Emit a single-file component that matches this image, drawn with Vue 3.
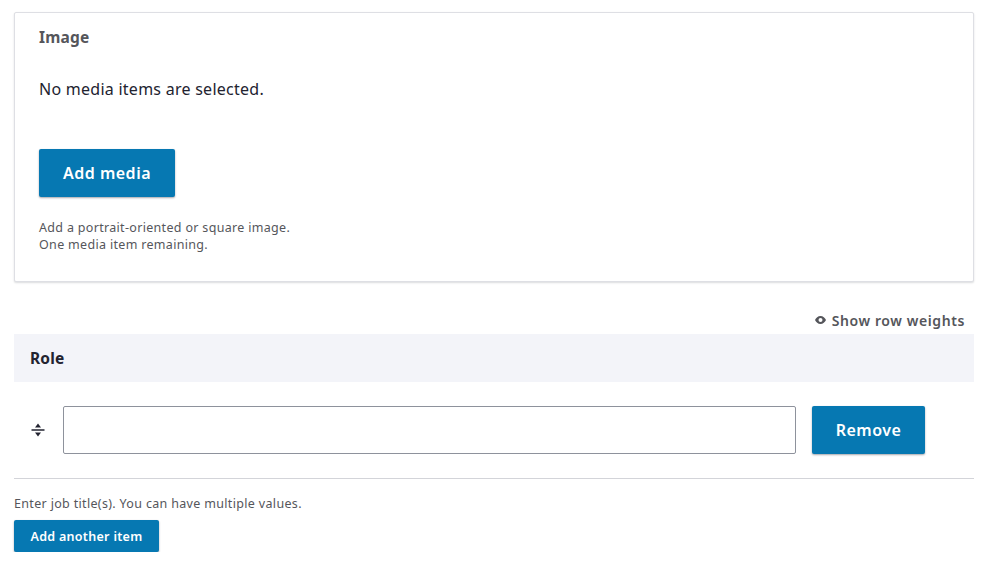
<script setup>
const hints = ["Add a portrait-oriented or square image.", "One media item remaining."];
</script>
<template>
  <div class="page">
    <section class="card">
      <h4 class="label">Image</h4>
      <p class="empty">No media items are selected.</p>
      <button class="btn add-media" type="button">Add media</button>
      <div class="desc">
        <div v-for="line in hints" :key="line">{{ line }}</div>
      </div>
    </section>

    <div class="weights">
      <a class="weights-link">
        <svg width="11" height="8" viewBox="0 0 11 8">
          <path fill="#55565b" fill-rule="evenodd" d="M5.5 0C8 0 10 1.7 11 4 10 6.3 8 8 5.5 8S1 6.3 0 4C1 1.7 3 0 5.5 0ZM5.5 2a2 2 0 1 0 0 4 2 2 0 0 0 0-4Z" />
        </svg>
        Show row weights
      </a>
    </div>

    <div class="table-head">Role</div>
    <div class="row">
      <span class="handle">
        <svg width="14" height="14" viewBox="0 0 14 14">
          <path fill="#222330" d="M7 0.5 10 4.5H4Z M0.5 6.2H13.5V7.8H0.5Z M4 9.5H10L7 13.5Z" />
        </svg>
      </span>
      <input class="text-input" type="text" />
      <button class="btn remove" type="button">Remove</button>
    </div>

    <div class="help">Enter job title(s). You can have multiple values.</div>
    <button class="btn small" type="button">Add another item</button>
  </div>
</template>
<style scoped>
.page {
  width: 960px;
  padding: 12px 18px 0 14px;
  font-family: "Noto Sans", sans-serif;
  color: #222330;
}
.card {
  height: 270px;
  box-sizing: border-box;
  padding: 14px 24px 0;
  background: #fff;
  border: 1px solid #dedfe4;
  border-radius: 2px;
  box-shadow: 0 1px 2px rgba(34, 35, 48, 0.16);
}
.label {
  margin: 0;
  font-size: 15.5px;
  line-height: 20px;
  font-weight: 700;
  letter-spacing: 0.2px;
  color: #55565b;
}
.empty {
  margin: 32px 0 0;
  font-size: 16px;
  line-height: 20px;
  letter-spacing: 0.26px;
}
.btn {
  display: block;
  border: 0;
  border-radius: 2px;
  background: #0678b2;
  color: #fff;
  font-family: inherit;
  font-weight: 600;
  letter-spacing: 0.5px;
  box-shadow: 0 1px 2px rgba(34, 35, 48, 0.4);
}
.add-media {
  width: 136px;
  height: 48px;
  margin-top: 50px;
  font-size: 16px;
}
.desc {
  margin-top: 22px;
  font-size: 12.5px;
  line-height: 17px;
  letter-spacing: 0.32px;
  color: #55565b;
}
.weights {
  display: flex;
  justify-content: flex-end;
  padding: 29px 9px 0 0;
  height: 23px;
}
.weights-link {
  display: flex;
  align-items: center;
  gap: 6px;
  height: 18px;
  font-size: 14px;
  font-weight: 600;
  letter-spacing: 0.6px;
  color: #55565b;
}
.table-head {
  height: 48px;
  padding-left: 16px;
  line-height: 48px;
  background: #f3f4f9;
  font-size: 15.5px;
  font-weight: 700;
  letter-spacing: 0.2px;
}
.row {
  display: flex;
  align-items: center;
  height: 97px;
  box-sizing: border-box;
  padding-bottom: 1px;
  border-bottom: 1px solid #d3d4d9;
}
.handle {
  display: flex;
  width: 48px;
  justify-content: center;
}
.text-input {
  width: 733px;
  height: 48px;
  margin-left: 1px;
  box-sizing: border-box;
  border: 1px solid #8e929c;
  border-radius: 2px;
  background: #fff;
}
.remove {
  width: 113px;
  height: 48px;
  margin-left: 16px;
  font-size: 16px;
}
.help {
  margin-top: 16px;
  font-size: 12.5px;
  line-height: 17px;
  letter-spacing: 0.33px;
  color: #55565b;
}
.small {
  width: 145px;
  height: 32px;
  margin-top: 8px;
  font-size: 12.5px;
  letter-spacing: 0.3px;
}
</style>
<style>
html, body { background: #fff; }
</style>
